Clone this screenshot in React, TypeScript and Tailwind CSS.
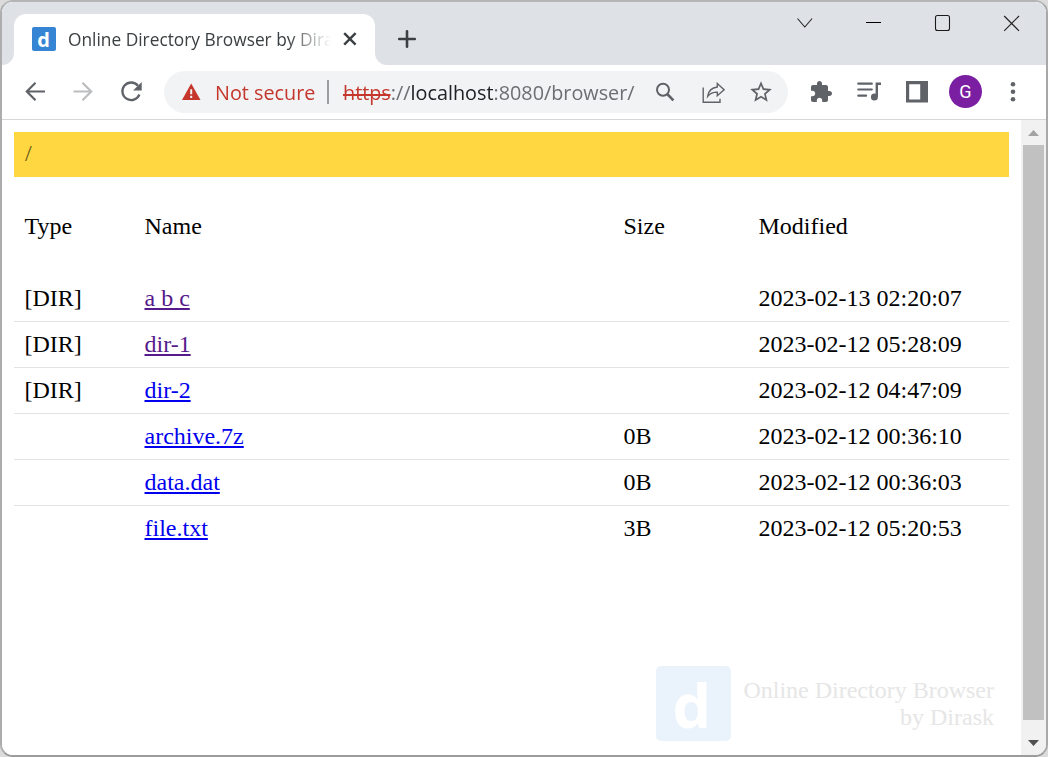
import React from "react";

type Entry = { type: string; name: string; size: string; modified: string; visited?: boolean };

const entries: Entry[] = [
  { type: "[DIR]", name: "a b c", size: "", modified: "2023-02-13 02:20:07", visited: true },
  { type: "[DIR]", name: "dir-1", size: "", modified: "2023-02-12 05:28:09", visited: true },
  { type: "[DIR]", name: "dir-2", size: "", modified: "2023-02-12 04:47:09" },
  { type: "", name: "archive.7z", size: "0B", modified: "2023-02-12 00:36:10" },
  { type: "", name: "data.dat", size: "0B", modified: "2023-02-12 00:36:03" },
  { type: "", name: "file.txt", size: "3B", modified: "2023-02-12 05:20:53" },
];

function TabStrip() {
  return (
    <header className="flex h-[63px] shrink-0 bg-white">
      <div className="w-3 rounded-br-[12px] bg-[#dee1e6]" />
      <div className="w-[361px] bg-[#dee1e6] pt-3">
        <div className="flex h-[51px] items-center rounded-t-[12px] bg-white pb-[2px] pl-[18px]">
          <div className="flex h-6 w-6 shrink-0 justify-center rounded-[2px] bg-[#3585d4]">
            <span className="-ml-px text-[20px] leading-[25px] font-bold text-white">d</span>
          </div>
          <div className="ml-3 w-[263px] [mask-image:linear-gradient(to_right,black_220px,transparent_263px)]">
            <span className="block w-max origin-left scale-x-[0.962] text-[18px] leading-[24px] whitespace-nowrap text-[#3c4043]">
              Online Directory Browser by Diras
            </span>
          </div>
          <svg className="ml-[11px] h-4 w-4" viewBox="0 0 16 16" fill="none" stroke="#3c4043" strokeWidth="2.4">
            <path d="M2.2 2.2l11.4 11.4M13.6 2.2L2.2 13.6" />
          </svg>
        </div>
      </div>
      <div className="flex flex-1 rounded-bl-[12px] bg-[#dee1e6]">
        <svg className="mt-[27px] ml-[22px] h-5 w-5" viewBox="0 0 20 20" stroke="#3c4043" strokeWidth="2.6" strokeLinecap="round">
          <path d="M2.2 10h15.6M10 2.2v15.6" />
        </svg>
        <div className="mt-[11px] mr-[24px] ml-auto flex h-5 gap-[49px]">
          <svg className="h-5 w-5" viewBox="0 0 20 20" fill="none" stroke="#222" strokeWidth="1.1">
            <path d="M2.5 5.5l7.3 8.5 7.3-8.5" />
          </svg>
          <svg className="h-5 w-5" viewBox="0 0 20 20" stroke="#000" strokeWidth="1">
            <path d="M2 9.5h15" />
          </svg>
          <svg className="h-5 w-5" viewBox="0 0 20 20" fill="none" stroke="#1a1a1a" strokeWidth="1.1">
            <rect x="2.5" y="2.5" width="14" height="15" rx="2" />
          </svg>
          <svg className="h-5 w-5" viewBox="0 0 20 20" stroke="#222" strokeWidth="1.2">
            <path d="M2.2 3l14.8 14.8M17 3L2.2 17.8" />
          </svg>
        </div>
      </div>
    </header>
  );
}

function Toolbar() {
  return (
    <div className="flex h-[55px] shrink-0 items-center border-b border-[#d5d7da] bg-white pl-[21px]">
      <svg className="h-6 w-6" viewBox="0 0 24 24" fill="none" stroke="#5f6368" strokeWidth="2.2">
        <path d="M22 11.500H3.500M12.500 2.800L3.800 11.500l8.700 8.700" />
      </svg>
      <svg className="ml-6 h-6 w-6" viewBox="0 0 24 24" fill="none" stroke="#bbbdbf" strokeWidth="2.2">
        <path d="M2.500 11.500h18M11.500 2.800l8.700 8.700-8.700 8.700" />
      </svg>
      <svg className="ml-6 h-6 w-6" viewBox="0 0 24 24">
        <path d="M19 5.700A8.800 8.800 0 1 0 20.400 14.500" fill="none" stroke="#5f6368" strokeWidth="2.300" />
        <path d="M22.700 2v8.400h-8.600z" fill="#5f6368" />
      </svg>
      <div className="ml-[21px] flex h-[42px] w-[624px] items-center rounded-full bg-[#f1f3f4] pl-[18px] text-[20px] leading-7 whitespace-nowrap">
        <svg className="h-5 w-5 shrink-0" viewBox="0 0 20 20">
          <path d="M9.200 1.500L18.500 18H0z" fill="#c5362c" />
          <path d="M9.200 7.300v5M9.200 13.800v2.200" stroke="#f1f3f4" strokeWidth="2" />
        </svg>
        <div className="ml-[13px] w-[100px] pt-[2px]">
          <span className="block w-max origin-left scale-x-[0.99] text-[#c5362c]">Not secure</span>
        </div>
        <div className="ml-3 h-6 w-0.5 bg-[#9a9da0]" />
        <div className="ml-[14px] w-[293px] pt-[2px]">
          <span className="block w-max origin-left scale-x-[0.99] text-[#6c6f72]">
            <span className="relative text-[#c5362c] after:absolute after:top-[15px] after:left-0 after:h-0.5 after:w-full after:bg-[#c5362c]">
              https
            </span>
            ://
            <span className="text-[#202124]">localhost</span>:8080/browser/
          </span>
        </div>
        <svg className="ml-[18px] h-6 w-6 shrink-0" viewBox="0 0 24 24" fill="none" stroke="#5f6368">
          <circle cx="9" cy="9.800" r="6" strokeWidth="2" />
          <path d="M13.200 14l6.200 6.400" strokeWidth="2.600" />
        </svg>
        <svg className="ml-6 h-6 w-6 shrink-0" viewBox="0 0 24 24" fill="none" stroke="#5f6368" strokeWidth="1.400">
          <path d="M1.200 7.500v14.700h16.800v-3.400" />
          <path d="M15.300 3.400l6.800 6.300-6.800 6v-3.600c-4.500 0-7.300 1.200-9.600 4.100.7-5 3.700-8.400 9.600-9.200z" />
        </svg>
        <svg className="ml-[22px] h-[26px] w-[26px] shrink-0" viewBox="0 0 24 24" fill="#5f6368">
          <path d="M22 9.240l-7.190-.62L12 2 9.190 8.630 2 9.240l5.460 4.730L5.820 21 12 17.270 18.180 21l-1.630-7.030L22 9.240zM12 15.400l-3.760 2.270 1-4.280-3.320-2.880 4.380-.38L12 6.100l1.710 4.040 4.380.38-3.320 2.880 1 4.280L12 15.400z" />
        </svg>
      </div>
      <svg className="mb-px ml-[21px] h-[24px] w-[24px]" viewBox="0 0 24 24" fill="#5f6368">
        <path d="M20.5 11H19V7c0-1.1-.9-2-2-2h-4V3.500C13 2.120 11.880 1 10.500 1S8 2.120 8 3.500V5H4c-1.100 0-1.990.900-1.990 2v3.800H3.500c1.490 0 2.700 1.210 2.700 2.700s-1.210 2.700-2.700 2.700H2V20c0 1.100.900 2 2 2h3.800v-1.500c0-1.490 1.210-2.700 2.700-2.700 1.490 0 2.700 1.210 2.700 2.700V22H17c1.100 0 2-.900 2-2v-4h1.500c1.380 0 2.500-1.120 2.500-2.500S21.880 11 20.500 11z" />
      </svg>
      <svg className="ml-6 h-6 w-6" viewBox="0 0 24 24" fill="none" stroke="#5f6368" strokeWidth="2.200" strokeLinecap="round">
        <path d="M1.300 3.700h13.500M1.300 9.500h13.500M1.300 15.700h7.800" />
        <path d="M24 3.700h-4.200v13.400" strokeLinecap="butt" strokeWidth="2.400" />
        <circle cx="17.400" cy="17" r="3.500" fill="#5f6368" stroke="none" />
      </svg>
      <svg className="ml-[25px] h-[22px] w-[22px]" viewBox="0 0 22 22">
        <path fillRule="evenodd" d="M0 0h22v21.500H0zM3.200 3.200v15.300h11V3.200z" fill="#5f6368" />
      </svg>
      <div className="mb-px ml-[21px] flex h-[33px] w-[33px] items-center justify-center rounded-full bg-[#7b1fa2] font-[Roboto,sans-serif] text-[18px] text-white">
        G
      </div>
      <svg className="ml-[25px] h-6 w-[12px]" viewBox="0 0 12 24" fill="#5f6368">
        <circle cx="6" cy="4.200" r="2.300" />
        <circle cx="6" cy="11.700" r="2.300" />
        <circle cx="6" cy="19.200" r="2.300" />
      </svg>
    </div>
  );
}

function Listing() {
  return (
    <main className="flex flex-1 flex-col bg-white pt-3 pr-3 pl-3 font-['Liberation_Serif',serif] text-[24px] leading-[27px] text-black">
      <div className="h-[45px] bg-[#ffd740] px-[11px] pt-[8px] text-[#665619]">/</div>
      <div className="mt-[27px] grid h-[45px] grid-cols-[120px_479px_135px_1fr] items-center pl-[10.5px]">
        <span>Type</span>
        <span>Name</span>
        <span>Size</span>
        <span>Modified</span>
      </div>
      <div className="mt-[27px]">
        {entries.map((e) => (
          <div
            key={e.name}
            className="grid h-[46px] grid-cols-[120px_479px_135px_1fr] items-center border-b border-[#e3e3e3] pl-[10.5px] last:border-transparent"
          >
            <span>{e.type}</span>
            <a className={e.visited ? "text-[#551a8b] underline decoration-2 underline-offset-[2px]" : "text-[#0000ee] underline decoration-2 underline-offset-[2px]"}>
              {e.name}
            </a>
            <span>{e.size}</span>
            <span>{e.modified}</span>
          </div>
        ))}
      </div>
      <footer className="mt-auto mr-[15px] mb-[14px] flex items-center justify-end gap-3">
        <div className="flex h-[75px] w-[75px] justify-center rounded-[5px] bg-[#eaf3fb]">
          <span className="-ml-[4px] font-['Open_Sans',sans-serif] text-[61px] leading-[77px] font-bold text-white">d</span>
        </div>
        <div className="text-right text-[#e6e6e6]">
          Online Directory Browser
          <br />
          by Dirask
        </div>
      </footer>
    </main>
  );
}

function Scrollbar() {
  return (
    <div className="flex w-[25px] flex-col items-center bg-[#f1f1f1]">
      <div className="flex h-[25px] items-center justify-center">
        <svg className="h-[6px] w-[11px]" viewBox="0 0 11 6" fill="#a3a3a3">
          <path d="M0 6L5.500 0 11 6z" />
        </svg>
      </div>
      <div className="w-[21px] flex-1 bg-[#c1c1c1]" />
      <div className="flex h-[35px] items-center justify-center pt-[11px]">
        <svg className="h-[6px] w-[11px]" viewBox="0 0 11 6" fill="#505050">
          <path d="M0 0l5.500 6L11 0z" />
        </svg>
      </div>
    </div>
  );
}

export default function App() {
  return (
    <div className="h-[757px] w-[1048px] bg-[#dcdcdc]">
      <div className="flex h-[757px] w-[1048px] flex-col overflow-hidden rounded-[13px] border-2 border-t-[#b5b5b5] border-r-[#a8a8a8] border-b-[#9c9c9c] border-l-[#adadad] bg-white font-['Open_Sans',sans-serif]">
        <TabStrip />
        <Toolbar />
        <div className="flex min-h-0 flex-1">
          <Listing />
          <Scrollbar />
        </div>
      </div>
    </div>
  );
}
